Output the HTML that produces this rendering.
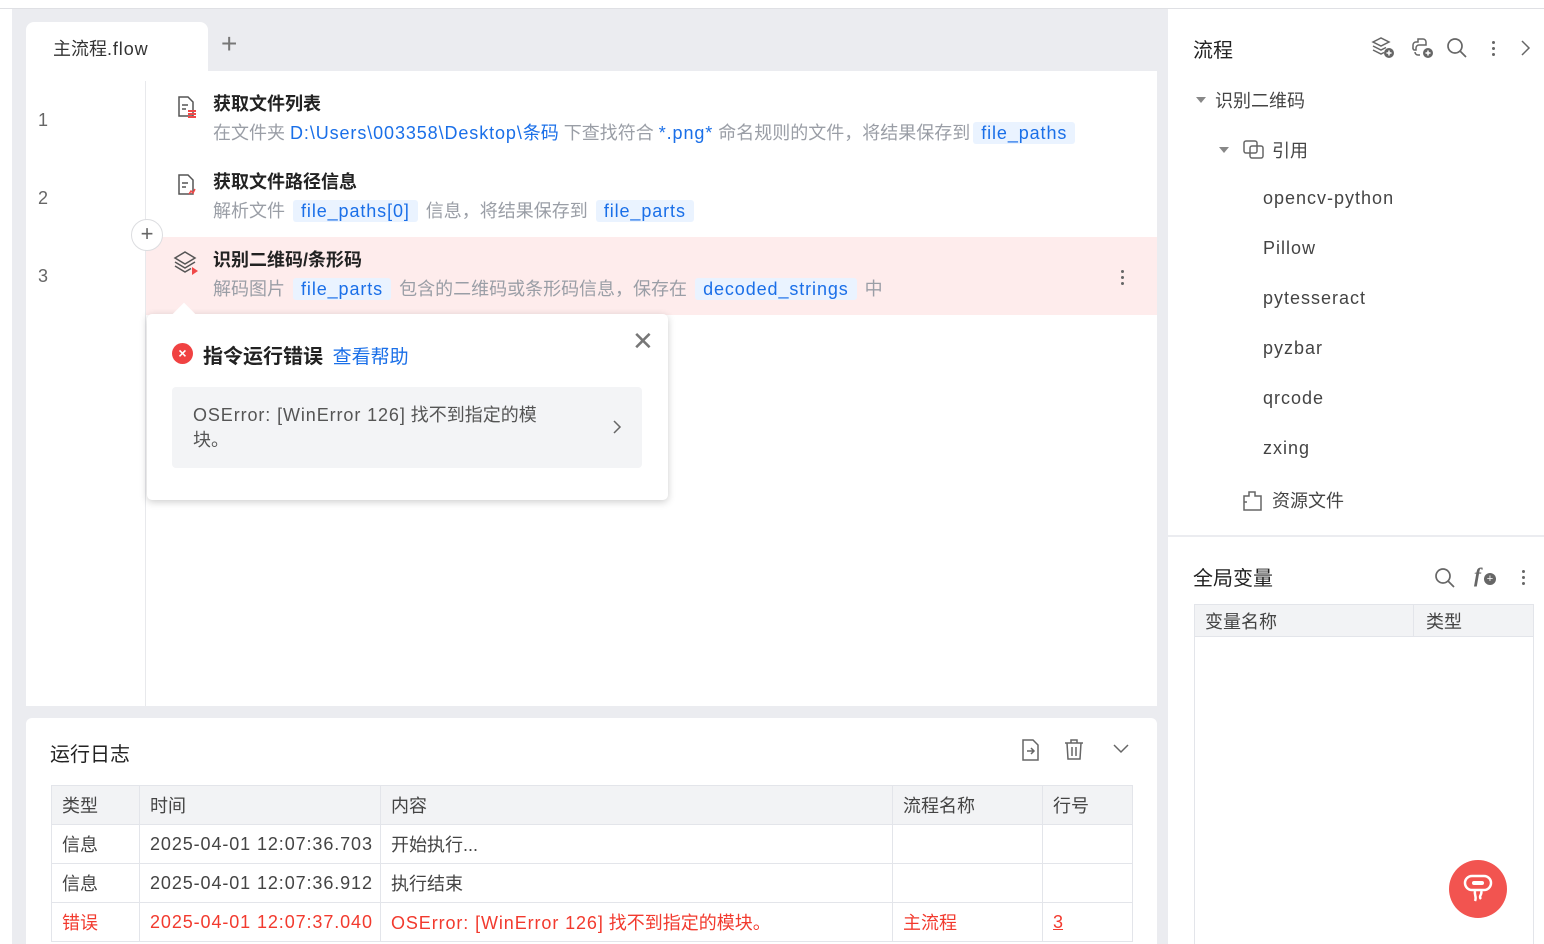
<!DOCTYPE html>
<html><head><meta charset="utf-8"><style>
*{box-sizing:border-box;margin:0;padding:0}
html{width:1544px;height:944px;overflow:hidden}
body{width:1544px;height:944px;overflow:hidden;background:#ebecf0;font-family:"Liberation Sans","Noto Sans CJK SC",sans-serif;position:relative;color:#333}
.a{position:absolute}
.l{letter-spacing:.9px}
.tag{background:#eaf3ff;color:#1a6fe8;padding:1px 8px;border-radius:3px;margin:0 3px;letter-spacing:.9px}
.blue{color:#1a6fe8}
.g{color:#9a9ea6}
.t{font-size:18px;font-weight:bold;color:#222}
.d{font-size:18px}
.ln{font-size:18px;color:#666}
table{border-collapse:collapse;table-layout:fixed}
td{border:1px solid #e3e5ea;font-size:18px;color:#444;padding:0 10px;height:39px;white-space:nowrap;overflow:hidden}
.tr{color:#f23a2e}
.side{font-size:18px;color:#444}
.sl{letter-spacing:1px}
</style></head><body>
<div class="a" style="left:0;top:0;width:1544px;height:8px;background:#fff"></div>
<div class="a" style="left:0;top:8px;width:1544px;height:1px;background:#dfe0e4"></div>
<div class="a" style="left:0;top:9px;width:12px;height:935px;background:#fff"></div>
<div class="a" style="left:26px;top:22px;width:182px;height:50px;background:#fff;border-radius:8px 8px 0 0"></div>
<div class="a" style="left:53px;top:35px;font-size:18px;color:#333">主流程<span class="l">.flow</span></div>
<div class="a" style="left:221px;top:28px;font-size:28px;color:#777;font-weight:300">+</div>
<div class="a" style="left:26px;top:71px;width:1131px;height:635px;background:#fff"></div>
<div class="a" style="left:145px;top:81px;width:1px;height:625px;background:#e8e9ec"></div>
<div class="a ln" style="left:38px;top:110px">1</div>
<div class="a ln" style="left:38px;top:188px">2</div>
<div class="a ln" style="left:38px;top:266px">3</div>
<div class="a" style="left:146px;top:237px;width:1011px;height:78px;background:#feecec"></div>
<div class="a" style="left:131px;top:219px;width:32px;height:32px;border:1px solid #dcdde0;border-radius:50%;background:#fff;text-align:center;line-height:28px;font-size:22px;color:#666">+</div>
<svg class="a" style="left:176px;top:95px" width="22" height="24" viewBox="0 0 22 24"><path d="M3 2h9l5 5v14H3z" fill="none" stroke="#555" stroke-width="1.5"/><path d="M6 10h6M6 14h4" stroke="#555" stroke-width="1.5"/><path d="M12 16h8M12 19h8M12 22h8" stroke="#f04848" stroke-width="2"/></svg>
<div class="a t" style="left:213px;top:90px">获取文件列表</div>
<div class="a d g" style="left:213px;top:119px;white-space:nowrap">在文件夹 <span class="blue l">D:\Users\003358\Desktop\</span><span class="blue">条码</span> 下查找符合 <span class="blue l">*.png*</span> 命名规则的文件，将结果保存到<span class="tag">file_paths</span></div>
<svg class="a" style="left:176px;top:173px" width="22" height="24" viewBox="0 0 22 24"><path d="M3 2h9l5 5v14H3z" fill="none" stroke="#555" stroke-width="1.5"/><path d="M6 10h6M6 14h4" stroke="#555" stroke-width="1.5"/><path d="M13 21l2-3 2 2 2-4" stroke="#f04848" stroke-width="1.5" fill="none"/></svg>
<div class="a t" style="left:213px;top:168px">获取文件路径信息</div>
<div class="a d g" style="left:213px;top:197px;white-space:nowrap">解析文件 <span class="tag">file_paths[0]</span> 信息，将结果保存到 <span class="tag">file_parts</span></div>
<svg class="a" style="left:173px;top:250px" width="26" height="26" viewBox="0 0 26 26"><path d="M12 2l10 6-10 6-10-6z" fill="none" stroke="#555" stroke-width="1.5"/><path d="M2 12l10 6 10-6M2 16l10 6 6-3.5" fill="none" stroke="#555" stroke-width="1.5"/><path d="M19 17l6 4-6 4z" fill="#f04848"/></svg>
<div class="a t" style="left:213px;top:246px">识别二维码/条形码</div>
<div class="a d g" style="left:213px;top:275px;white-space:nowrap">解码图片 <span class="tag">file_parts</span> 包含的二维码或条形码信息，保存在 <span class="tag">decoded_strings</span> 中</div>
<div class="a" style="left:1121px;top:270px;width:3px;height:3px;background:#666;border-radius:50%;box-shadow:0 6px 0 #666,0 12px 0 #666"></div>
<div class="a" style="left:147px;top:314px;width:521px;height:186px;background:#fff;border-radius:5px;box-shadow:0 2px 8px rgba(0,0,0,.2)"></div>
<div class="a" style="left:176px;top:306px;width:16px;height:16px;background:#fff;transform:rotate(45deg)"></div>
<div class="a" style="left:172px;top:343px;width:21px;height:21px;border-radius:50%;background:#f04242;color:#fff;font-size:14px;font-weight:bold;text-align:center;line-height:21px">×</div>
<div class="a" style="left:203px;top:340px;font-size:20px;font-weight:bold;color:#222">指令运行错误 <span style="font-weight:normal;color:#1a6fe8;font-size:19px;margin-left:4px">查看帮助</span></div>
<div class="a" style="left:632px;top:326px;font-size:26px;color:#777;font-weight:300">✕</div>
<div class="a" style="left:172px;top:387px;width:470px;height:81px;background:#f3f4f6;border-radius:4px"></div>
<div class="a" style="left:193px;top:403px;width:360px;font-size:18px;color:#555;line-height:25px"><span class="l">OSError: [WinError 126]</span> 找不到指定的模块。</div>
<svg class="a" style="left:611px;top:419px" width="12" height="16" viewBox="0 0 12 16"><path d="M3 2l6 6-6 6" fill="none" stroke="#666" stroke-width="1.5"/></svg>
<div class="a" style="left:26px;top:718px;width:1131px;height:226px;background:#fff;border-radius:6px 6px 0 0"></div>
<div class="a" style="left:50px;top:738px;font-size:20px;color:#222">运行日志</div>
<svg class="a" style="left:1020px;top:738px" width="22" height="24" viewBox="0 0 22 24"><path d="M3 2h10l5 5v15H3z" fill="none" stroke="#666" stroke-width="1.5"/><path d="M7 13h7M11 10l3 3-3 3" fill="none" stroke="#666" stroke-width="1.5"/></svg>
<svg class="a" style="left:1063px;top:738px" width="22" height="24" viewBox="0 0 22 24"><path d="M2 5h18M8 5V2h6v3M4 5l1 16h12l1-16M9 9v9M13 9v9" fill="none" stroke="#666" stroke-width="1.5"/></svg>
<svg class="a" style="left:1112px;top:743px" width="18" height="12" viewBox="0 0 18 12"><path d="M2 2l7 7 7-7" fill="none" stroke="#666" stroke-width="1.5"/></svg>
<table class="a" style="left:51px;top:785px;width:1082px">
<colgroup><col style="width:88px"><col style="width:241px"><col style="width:512px"><col style="width:150px"><col></colgroup>
<tr style="background:#f2f3f5"><td style="height:32px">类型</td><td>时间</td><td>内容</td><td>流程名称</td><td>行号</td></tr>
<tr><td>信息</td><td class="l">2025-04-01 12:07:36.703</td><td>开始执行...</td><td></td><td></td></tr>
<tr><td>信息</td><td class="l">2025-04-01 12:07:36.912</td><td>执行结束</td><td></td><td></td></tr>
<tr><td class="tr">错误</td><td class="tr l">2025-04-01 12:07:37.040</td><td class="tr"><span class="l">OSError: [WinError 126]</span> 找不到指定的模块。</td><td class="tr">主流程</td><td class="tr"><u>3</u></td></tr>
</table>
<div class="a" style="left:1168px;top:9px;width:376px;height:526px;background:#fff"></div>
<div class="a" style="left:1168px;top:537px;width:376px;height:407px;background:#fff"></div>
<div class="a" style="left:1193px;top:34px;font-size:20px;color:#222">流程</div>
<svg class="a" style="left:1370px;top:36px" width="26" height="24" viewBox="0 0 26 24"><path d="M3 6l8-4 8 4-8 4z M3 10l8 4 5-2.5 M3 14l8 4 3-1.5" fill="none" stroke="#666" stroke-width="1.5"/><circle cx="19" cy="17" r="5" fill="#666"/><path d="M19 14.5v5M16.5 17h5" stroke="#fff" stroke-width="1.5"/></svg>
<svg class="a" style="left:1410px;top:36px" width="26" height="24" viewBox="0 0 26 24"><path d="M8 3h5a3 3 0 0 1 3 3v3H9a3 3 0 0 0-3 3v2H4a3 3 0 0 1-1-3V9a3 3 0 0 1 3-3h2z M10 19h-2a3 3 0 0 1-3-3" fill="none" stroke="#666" stroke-width="1.5"/><circle cx="18" cy="17" r="5" fill="#666"/><path d="M18 14.5v5M15.5 17h5" stroke="#fff" stroke-width="1.5"/></svg>
<svg class="a" style="left:1446px;top:37px" width="22" height="22" viewBox="0 0 22 22"><circle cx="9" cy="9" r="7" fill="none" stroke="#666" stroke-width="1.7"/><path d="M14 14l6 6" stroke="#666" stroke-width="1.7"/></svg>
<div class="a" style="left:1492px;top:41px;width:3px;height:3px;background:#666;border-radius:50%;box-shadow:0 6px 0 #666,0 12px 0 #666"></div>
<svg class="a" style="left:1520px;top:39px" width="12" height="18" viewBox="0 0 12 18"><path d="M2 2l7 7-7 7" fill="none" stroke="#666" stroke-width="1.5"/></svg>
<svg class="a" style="left:1195px;top:96px" width="12" height="8" viewBox="0 0 12 8"><path d="M1 1h10L6 7z" fill="#888"/></svg>
<div class="a side" style="left:1215px;top:87px">识别二维码</div>
<svg class="a" style="left:1218px;top:146px" width="12" height="8" viewBox="0 0 12 8"><path d="M1 1h10L6 7z" fill="#888"/></svg>
<svg class="a" style="left:1242px;top:139px" width="24" height="22" viewBox="0 0 24 22"><rect x="2" y="2" width="13" height="12" rx="2" fill="none" stroke="#666" stroke-width="1.5"/><rect x="8" y="7" width="13" height="12" rx="2" fill="none" stroke="#666" stroke-width="1.5"/></svg>
<div class="a side" style="left:1272px;top:137px">引用</div>
<div class="a side sl" style="left:1263px;top:188px">opencv-python</div>
<div class="a side sl" style="left:1263px;top:238px">Pillow</div>
<div class="a side sl" style="left:1263px;top:288px">pytesseract</div>
<div class="a side sl" style="left:1263px;top:338px">pyzbar</div>
<div class="a side sl" style="left:1263px;top:388px">qrcode</div>
<div class="a side sl" style="left:1263px;top:438px">zxing</div>
<svg class="a" style="left:1242px;top:488px" width="22" height="24" viewBox="0 0 22 24"><path d="M2 22V8h5V4h6v4h6v14z M2 14h3" fill="none" stroke="#666" stroke-width="1.5"/></svg>
<div class="a side" style="left:1272px;top:487px">资源文件</div>
<div class="a" style="left:1193px;top:562px;font-size:20px;color:#222">全局变量</div>
<svg class="a" style="left:1434px;top:567px" width="22" height="22" viewBox="0 0 22 22"><circle cx="9" cy="9" r="7" fill="none" stroke="#666" stroke-width="1.7"/><path d="M14 14l6 6" stroke="#666" stroke-width="1.7"/></svg>
<div class="a" style="left:1474px;top:563px;font-size:21px;font-style:italic;font-weight:bold;color:#666;font-family:'Liberation Serif',serif">f</div>
<div class="a" style="left:1484px;top:573px;width:12px;height:12px;border-radius:50%;background:#666;color:#fff;font-size:11px;line-height:12px;text-align:center">+</div>
<div class="a" style="left:1522px;top:570px;width:3px;height:3px;background:#666;border-radius:50%;box-shadow:0 6px 0 #666,0 12px 0 #666"></div>
<div class="a" style="left:1194px;top:604px;width:340px;height:340px;border:1px solid #e3e5ea;border-bottom:none"></div>
<div class="a" style="left:1195px;top:605px;width:338px;height:32px;background:#f2f3f5;border-bottom:1px solid #e3e5ea"></div>
<div class="a" style="left:1413px;top:605px;width:1px;height:32px;background:#e3e5ea"></div>
<div class="a side" style="left:1205px;top:608px">变量名称</div>
<div class="a side" style="left:1426px;top:608px">类型</div>
<div class="a" style="left:1449px;top:860px;width:58px;height:58px;border-radius:50%;background:#f25450"></div>
<svg class="a" style="left:1459px;top:870px" width="38" height="38" viewBox="0 0 38 38"><rect x="6" y="6" width="26" height="14" rx="7" fill="none" stroke="#fff" stroke-width="2.5"/><rect x="13" y="11" width="12" height="4" rx="2" fill="#fff"/><path d="M16 21c-1 4 2 6 0 10M22 21c2 3-3 5 0 8" fill="none" stroke="#fff" stroke-width="2.5"/></svg>
</body></html>
